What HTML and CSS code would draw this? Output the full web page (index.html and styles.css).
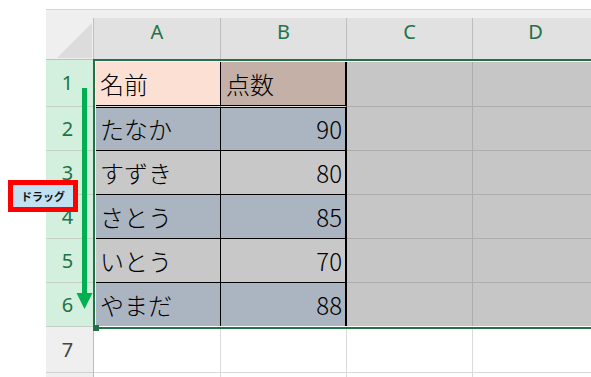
FILE: index.html
```html
<!DOCTYPE html>
<html lang="ja">
<head>
<meta charset="utf-8">
<title>点数表</title>
<link rel="stylesheet" href="styles.css">
</head>
<body>
<div class="page">
  <div class="sheet">
    <div class="topbar"></div>
    <div class="grid">
      <div class="corner"><span class="corner-tri"></span></div>
      <div class="colhead">A</div>
      <div class="colhead">B</div>
      <div class="colhead">C</div>
      <div class="colhead">D</div>

      <div class="rowhead">1</div>
      <div class="cell name head peach">名前</div>
      <div class="cell score label head rose">点数</div>
      <div class="cell dim"></div>
      <div class="cell dim"></div>

      <div class="rowhead">2</div>
      <div class="cell name first slate">たなか</div>
      <div class="cell score first slate">90</div>
      <div class="cell dim"></div>
      <div class="cell dim"></div>

      <div class="rowhead">3</div>
      <div class="cell name grey">すずき</div>
      <div class="cell score grey">80</div>
      <div class="cell dim"></div>
      <div class="cell dim"></div>

      <div class="rowhead">4</div>
      <div class="cell name slate">さとう</div>
      <div class="cell score slate">85</div>
      <div class="cell dim"></div>
      <div class="cell dim"></div>

      <div class="rowhead">5</div>
      <div class="cell name grey">いとう</div>
      <div class="cell score grey">70</div>
      <div class="cell dim"></div>
      <div class="cell dim"></div>

      <div class="rowhead">6</div>
      <div class="cell name slate">やまだ</div>
      <div class="cell score slate">88</div>
      <div class="cell dim"></div>
      <div class="cell dim"></div>

      <div class="rowhead plain">7</div>
      <div class="cell"></div>
      <div class="cell"></div>
      <div class="cell"></div>
      <div class="cell"></div>

      <div class="rowhead plain"></div>
      <div class="cell"></div>
      <div class="cell"></div>
      <div class="cell"></div>
      <div class="cell"></div>
    </div>
    <div class="selection"></div>
    <span class="fill-handle"></span>
  </div>

  <div class="drag-label">ドラッグ</div>
  <svg class="drag-arrow" width="17" height="226" viewBox="0 0 17 226">
    <rect x="6" y="2" width="5" height="208" fill="#00b050"/>
    <polygon points="0.5,207 16.5,207 8.5,223" fill="#00b050"/>
  </svg>
</div>
</body>
</html>
```

FILE: styles.css
```css
* {
  box-sizing: border-box;
}

html,
body {
  margin: 0;
  background: #ffffff;
}

.page {
  position: relative;
  width: 591px;
  height: 377px;
  overflow: hidden;
}

.sheet {
  position: relative;
  margin-left: 46px;
  padding-top: 9px;
}

/* strip above the column headers */
.topbar {
  height: 9px;
  border-top: 1px solid #d6d6d6;
  background: #efefef;
}

.grid {
  display: grid;
  grid-template-columns: 48px 127px 126px 126px 126px;
  grid-template-rows: 42px 47px repeat(5, 44px) 46px 12px;
  width: max-content;
}

/* select-all corner */
.corner {
  background: #efefef;
  border-right: 1px solid #bfbfbf;
  border-bottom: 1px solid #bfbfbf;
  display: flex;
  justify-content: flex-end;
  align-items: flex-end;
  padding: 0 1px 1px 0;
}

.corner-tri {
  width: 35px;
  height: 35px;
  background: #dcdcdc;
  clip-path: polygon(100% 0, 100% 100%, 0 100%);
}

.colhead {
  background: #e1e1e1;
  border-right: 1px solid #bdbdbd;
  border-bottom: 1px solid #bdbdbd;
  color: #217346;
  font: 20px/20px "Noto Sans", "Liberation Sans", sans-serif;
  text-align: center;
  padding-top: 4px;
}

.rowhead {
  background: #d3efde;
  border-right: 1px solid #bdbdbd;
  border-bottom: 1px solid #c4d0c8;
  color: #217346;
  font: 20px/20px "Noto Sans", "Liberation Sans", sans-serif;
  display: flex;
  align-items: center;
  justify-content: center;
  padding-right: 4px;
}

.rowhead.plain {
  background: #efefef;
  color: #444444;
  border-bottom-color: #cfcfcf;
}

.cell {
  border-right: 1px solid #dadada;
  border-bottom: 1px solid #dadada;
  display: flex;
  align-items: center;
  padding: 0 6px;
  color: #000000;
  font: 300 24px "Noto Sans CJK JP", "Noto Sans", sans-serif;
  white-space: nowrap;
}

.cell.dim {
  background: #c6c6c6;
  border-color: #adadad;
}

.cell.name {
  border-right-color: #000000;
  border-bottom-color: #000000;
}

.cell.score {
  border-right: 2px solid #000000;
  border-bottom-color: #000000;
  justify-content: flex-end;
  padding-right: 3px;
}

.cell.score.label {
  justify-content: flex-start;
  padding-left: 5px;
}

/* double rule under the heading row */
.cell.head {
  border-bottom: 1px solid #e2dcd8;
  box-shadow: inset 0 -1px 0 #000000;
}

.cell.first {
  box-shadow: inset 0 1px 0 #000000;
}

.peach {
  background: #fce0d3;
}

.rose {
  background: #c4b0a6;
}

.slate {
  background: #abb5c1;
}

.grey {
  background: #c8c8c8;
}

/* active range outline */
.selection {
  position: absolute;
  left: 47px;
  top: 59px;
  width: 600px;
  height: 270px;
  border: 2px solid #217346;
  box-shadow: inset 0 0 0 1px #ffffff;
  pointer-events: none;
}

.fill-handle {
  position: absolute;
  left: 47px;
  top: 325px;
  width: 6px;
  height: 6px;
  background: #217346;
}

.drag-label {
  position: absolute;
  left: 8px;
  top: 180px;
  width: 70px;
  height: 32px;
  border: 5px solid #ff0000;
  background: #bfe1f2;
  color: #111111;
  font: bold 11px/1 "Noto Sans CJK JP", sans-serif;
  display: flex;
  align-items: center;
  justify-content: center;
}

.drag-arrow {
  position: absolute;
  left: 76px;
  top: 86px;
}
```
